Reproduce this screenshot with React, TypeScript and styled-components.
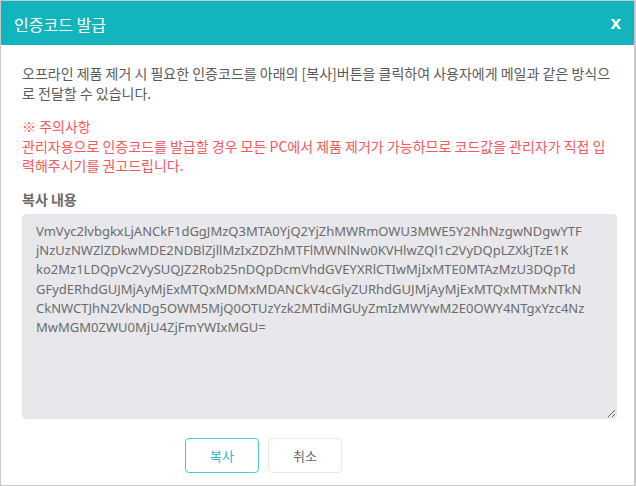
import React from 'react';
import styled, { createGlobalStyle } from 'styled-components';

const GlobalStyle = createGlobalStyle`
  html, body {
    margin: 0;
    padding: 0;
    background: #ffffff;
  }
  body {
    font-family: "Noto Sans", "Noto Sans CJK KR", sans-serif;
  }
`;

const Dialog = styled.div`
  box-sizing: border-box;
  width: 636px;
  height: 486px;
  border: 1px solid #c9c9c9;
  border-right-width: 2px;
  display: flex;
  flex-direction: column;
  background: #fff;
`;

const Header = styled.div`
  height: 44px;
  background: #12b4bd;
  display: flex;
  align-items: center;
  justify-content: space-between;
  padding: 2px 13px 0 13px;
  box-sizing: border-box;
  color: #fff;
  .title {
    font-family: "Noto Sans CJK KR", sans-serif;
    font-size: 16px;
  }
`;

const CloseButton = styled.button`
  border: 0;
  background: none;
  color: #fff;
  font-family: "Liberation Sans", Arial, sans-serif;
  font-weight: 700;
  font-size: 19px;
  padding: 0;
  line-height: 1;
  margin-top: -3px;
  cursor: pointer;
`;

const Body = styled.div`
  flex: 1;
  padding: 19px 17px 0 21px;
  display: flex;
  flex-direction: column;
  font-family: "Noto Sans CJK KR", sans-serif;
  font-size: 14px;
  line-height: 19.5px;
`;

const Paragraph = styled.p<{ $tone?: 'warn' }>`
  margin: 0 0 14px;
  white-space: nowrap;
  color: ${(p) => (p.$tone === 'warn' ? '#f4575c' : '#5a5a5a')};
`;

const Label = styled.div`
  color: #6a6a6a;
  font-weight: 700;
  margin-bottom: 5px;
`;

const CodeBox = styled.textarea`
  box-sizing: border-box;
  width: 595px;
  height: 205px;
  border: 1px solid #e6e6ea;
  border-radius: 4px;
  background: #e8e8ec;
  color: #6b6b6b;
  padding: 7px 10px 7px 13px;
  font-family: "Noto Sans", "Noto Sans CJK KR", sans-serif;
  font-size: 13px;
  line-height: 19.2px;
  white-space: pre;
  overflow: hidden;
  outline: none;
  resize: vertical;
`;

const Footer = styled.div`
  display: flex;
  gap: 9px;
  padding: 19px 0 0 163px;
`;

const Button = styled.button<{ $primary?: boolean }>`
  width: 74px;
  height: 35px;
  border-radius: 4px;
  background: #fff;
  border: ${(p) => (p.$primary ? '1.5px solid #4ec9cd' : '1px solid #e6e6e6')};
  color: ${(p) => (p.$primary ? '#28b9c0' : '#666')};
  font-family: "Noto Sans CJK KR", sans-serif;
  font-size: 13px;
  cursor: pointer;
`;

const code = [
  'VmVyc2lvbgkxLjANCkF1dGgJMzQ3MTA0YjQ2YjZhMWRmOWU3MWE5Y2NhNzgwNDgwYTF',
  'jNzUzNWZlZDkwMDE2NDBlZjllMzIxZDZhMTFlMWNlNw0KVHlwZQl1c2VyDQpLZXkJTzE1K',
  'ko2Mz1LDQpVc2VySUQJZ2Rob25nDQpDcmVhdGVEYXRlCTIwMjIxMTE0MTAzMzU3DQpTd',
  'GFydERhdGUJMjAyMjExMTQxMDMxMDANCkV4cGlyZURhdGUJMjAyMjExMTQxMTMxNTkN',
  'CkNWCTJhN2VkNDg5OWM5MjQ0OTUzYzk2MTdiMGUyZmIzMWYwM2E0OWY4NTgxYzc4Nz',
  'MwMGM0ZWU0MjU4ZjFmYWIxMGU=',
].join('\n');

export default function App() {
  return (
    <>
      <GlobalStyle />
      <Dialog>
        <Header>
          <span className="title">인증코드 발급</span>
          <CloseButton>x</CloseButton>
        </Header>
        <Body>
          <Paragraph>
            오프라인 제품 제거 시 필요한 인증코드를 아래의 [복사]버튼을 클릭하여 사용자에게 메일과 같은 방식으
            <br />
            로 전달할 수 있습니다.
          </Paragraph>
          <Paragraph $tone="warn">
            ※ 주의사항
            <br />
            관리자용으로 인증코드를 발급할 경우 모든 PC에서 제품 제거가 가능하므로 코드값을 관리자가 직접 입
            <br />
            력해주시기를 권고드립니다.
          </Paragraph>
          <Label>복사 내용</Label>
          <CodeBox readOnly value={code} />
          <Footer>
            <Button $primary>복사</Button>
            <Button>취소</Button>
          </Footer>
        </Body>
      </Dialog>
    </>
  );
}
